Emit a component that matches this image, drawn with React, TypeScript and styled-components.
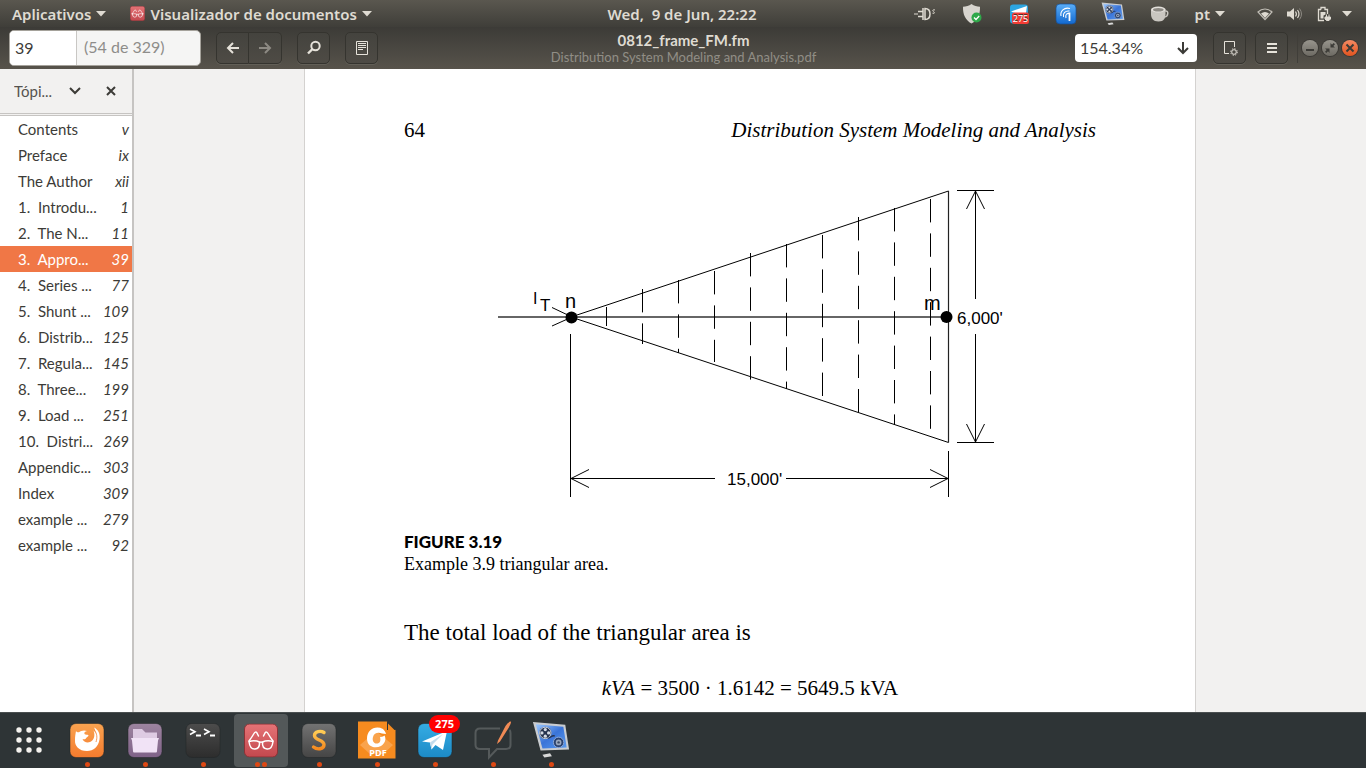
import React from "react";
import styled, { createGlobalStyle } from "styled-components";

const uiFont = `Lato, "Open Sans", "Liberation Sans", sans-serif`;
const bookFont = `"Liberation Serif", serif`;

const GlobalStyle = createGlobalStyle`
  * { box-sizing: border-box; }
  html, body { margin: 0; height: 100%; }
  body { font-family: ${uiFont}; font-size: 15px; color: #3c3b37; }
  button, input, select { font: inherit; color: inherit; }
  button { padding: 0; border: 0; background: none; cursor: default; }
  svg { display: block; flex: none; }
`;

const Desktop = styled.div`
  display: flex;
  flex-direction: column;
  height: 100vh;
  overflow: hidden;
`;

/* ---------- system panel ---------- */

const Panel = styled.header`
  flex: none;
  display: grid;
  grid-template-columns: 1fr auto 1fr;
  align-items: center;
  height: 27px;
  padding: 0 14px 0 12px;
  background: linear-gradient(#5a574f, #3f3e39);
  color: #dfdbd2;
  font-family: "Noto Sans", sans-serif;
  font-size: 15px;
  font-weight: 600;
  text-shadow: 0 -1px 0 #33322e;
`;

const PanelMenus = styled.div`
  display: flex;
  align-items: center;
  gap: 24px;
`;

const PanelButton = styled.button`
  display: flex;
  align-items: center;
  gap: 5px;
  white-space: pre;
`;

const Indicators = styled.div<{ $gap: number }>`
  display: flex;
  align-items: center;
  justify-content: flex-end;
  gap: ${(p) => p.$gap}px;
`;

/* ---------- viewer header bar ---------- */

const HeaderBar = styled.div`
  flex: none;
  display: grid;
  grid-template-columns: 1fr auto 1fr;
  align-items: center;
  height: 42px;
  padding: 0 8px 0 9px;
  background: linear-gradient(#3c3b37, #57534b);
  color: #dfdbd2;
`;

const BarGroup = styled.div<{ $gap: number; $end?: boolean }>`
  display: flex;
  align-items: center;
  justify-content: ${(p) => (p.$end ? "flex-end" : "flex-start")};
  gap: ${(p) => p.$gap}px;
`;

const PageEntry = styled.label`
  display: flex;
  width: 192px;
  height: 36px;
  border: 1px solid #a5a29b;
  border-radius: 5px;
  background: #f5f5f4;
  color: #8e8d8a;
  font-size: 16px;
  overflow: hidden;
`;

const PageInput = styled.input`
  width: 67px;
  padding: 0 5px 2px;
  border: 0;
  border-right: 1px solid #c9c7c4;
  background: #fff;
  color: #3c3b37;
  outline: 0;
`;

const PageTotal = styled.span`
  padding: 0 7px;
  line-height: 32px;
`;

const Linked = styled.div`
  display: flex;
`;

const ToolButton = styled.button<{ $side?: "left" | "right" }>`
  display: grid;
  place-items: center;
  width: 33px;
  height: 32px;
  border: 1px solid #35342f;
  border-left-width: ${(p) => (p.$side === "right" ? 0 : 1)}px;
  border-radius: ${(p) =>
    p.$side === "left" ? "5px 0 0 5px" : p.$side === "right" ? "0 5px 5px 0" : "5px"};
  background: linear-gradient(#44433e, #4e4b45);
  box-shadow: 0 1px 0 #625f57;
  color: #e6e2da;
  &:disabled { color: #8d8a83; }
`;

const Title = styled.h1`
  margin: 0;
  font-size: 15px;
  line-height: 18px;
  font-weight: 700;
  text-align: center;
`;

const Subtitle = styled.p`
  margin: 0;
  font-size: 13px;
  line-height: 16px;
  color: #918e86;
  text-align: center;
`;

const ZoomEntry = styled.label`
  display: flex;
  align-items: center;
  width: 122px;
  height: 28px;
  padding: 0 6px 0 5px;
  border-radius: 4px;
  background: #fff;
  color: #3c3b37;
`;

const ZoomInput = styled.input`
  flex: 1;
  min-width: 0;
  padding: 0 0 2px;
  border: 0;
  background: none;
  outline: 0;
  font-size: 16px;
`;

const BarDivider = styled.i`
  width: 1px;
  height: 30px;
  background: #403e39;
`;

const WindowButton = styled.button<{ $close?: boolean }>`
  display: grid;
  place-items: center;
  width: 16px;
  height: 16px;
  border-radius: 50%;
  background: ${(p) =>
    p.$close ? "linear-gradient(#f58a63, #e2541f)" : "linear-gradient(#98958d, #6d6a63)"};
  box-shadow: 0 0 0 1px #3a3834;
  color: #3c3b37;
`;

/* ---------- viewer body ---------- */

const Viewer = styled.div`
  flex: 1;
  min-height: 0;
  display: flex;
`;

const Sidebar = styled.aside`
  flex: none;
  width: 134px;
  border-right: 2px solid #c6c4c2;
  background: #fff;
`;

const SidebarHead = styled.div`
  display: flex;
  align-items: center;
  height: 47px;
  padding: 0 16px 0 14px;
  border-bottom: 3px double #c6c4c2;
  background: #f2f1f0;
  color: #55534f;
`;

const PaneSelect = styled.label`
  flex: 1;
  display: flex;
  align-items: center;
  gap: 3px;
`;

const PaneChoice = styled.select`
  appearance: none;
  width: 52px;
  padding: 0;
  border: 0;
  outline: 0;
  background: none;
`;

const Outline = styled.ul`
  margin: 0;
  padding: 0;
  list-style: none;
`;

const OutlineItem = styled.button<{ $active?: boolean }>`
  display: flex;
  justify-content: space-between;
  align-items: center;
  width: 100%;
  height: 26px;
  padding: 0 3px 0 18px;
  background: ${(p) => (p.$active ? "#f07746" : "transparent")};
  color: ${(p) => (p.$active ? "#fff" : "#3c3b37")};
  white-space: pre;
`;

const Canvas = styled.main`
  flex: 1;
  min-width: 0;
  overflow: hidden;
  background: #f2f1f0;
`;

const Sheet = styled.article`
  width: 100%;
  max-width: 892px;
  min-height: 100%;
  margin: 0 auto;
  padding: 48px 99px 0;
  border: solid #d4d2d0;
  border-width: 0 1px;
  background: #fff;
  color: #000;
  font-family: ${bookFont};
  font-size: 21px;
`;

const RunningHead = styled.div`
  display: flex;
  justify-content: space-between;
  line-height: 26px;
`;

const Figure = styled.figure`
  margin: 0;
  padding-top: 37px;
`;

const Caption = styled.figcaption`
  padding-top: 26px;
  font-size: 18px;
  line-height: 22px;
`;

const CaptionLabel = styled.strong`
  display: block;
  font-family: Lato, sans-serif;
  font-size: 17px;
  font-weight: 900;
`;

const Paragraph = styled.p`
  margin: 45px 0 0;
  font-size: 23px;
  line-height: 26px;
`;

const Equation = styled.p`
  margin: 29px 0 0;
  line-height: 26px;
  text-align: center;
`;

/* ---------- dock ---------- */

const Dock = styled.nav`
  flex: none;
  display: flex;
  gap: 4px;
  height: 56px;
  padding: 1px 2px;
  border-top: 1px solid #4a4f50;
  background: #2e3436;
`;

const DockItem = styled.button<{ $active?: boolean }>`
  position: relative;
  display: flex;
  flex-direction: column;
  align-items: center;
  width: 54px;
  padding-top: 6px;
  border-radius: 4px;
  background: ${(p) => (p.$active ? "#535859" : "transparent")};
`;

const Dots = styled.span`
  display: flex;
  gap: 2px;
  margin-top: 1px;
`;

const Dot = styled.i`
  width: 5px;
  height: 5px;
  border-radius: 50%;
  background: #dd4814;
`;

const Badge = styled.span`
  position: absolute;
  top: 1px;
  right: 2px;
  padding: 0 6px;
  border-radius: 9px;
  background: #f00;
  color: #fff;
  font: 700 11px/18px "Noto Sans", sans-serif;
`;

/* ---------- icons ---------- */

const Triangle = () => (
  <svg width="10" height="6" viewBox="0 0 10 6"><path d="M0 0h10L5 5.5z" fill="#dfdbd2" /></svg>
);

const Glasses = ({ size }: { size: number }) => (
  <svg width={size} height={size} viewBox="0 0 34 34">
    <defs><linearGradient id="red" x2="0" y2="1"><stop stopColor="#e57376" /><stop offset="1" stopColor="#c3484e" /></linearGradient></defs>
    <rect x=".5" y=".5" width="33" height="33" rx="5" fill="url(#red)" stroke="#8b3236" />
    <g fill="none" stroke="#fff" strokeWidth="1.5" strokeLinejoin="round" strokeLinecap="round">
      <path d="M5 18q6-1.500 10.500.5.500 6.500-4.500 7-5 .5-6-7.500z" />
      <path d="M29 18q-6-1.500-10.500.5-.5 6.500 4.500 7 5 .5 6-7.500z" />
      <path d="M15.500 19q1.500-1 3 0M5 17.500q3-4 5-7.500 1.500-2.500 3-.5l1.500 3M29 17.500q-3-4-5-7.500-1.500-2.500-3-.5l-1.500 3" />
    </g>
  </svg>
);

const PlugIcon = () => (
  <svg width="24" height="20" viewBox="0 0 24 20" fill="none" stroke="#dfdbd2">
    <path d="M5 7.500h5M5 12.500h5" strokeWidth="1.500" />
    <path d="M10 4v12M12 4.500c4 0 5 2.500 5 5.500s-1 5.500-5 5.500z" strokeWidth="1.500" />
    <path d="M1 10h4M22 6c-2-.8-3 .8-1.500 1.700s1 2.300-1 1.500" />
  </svg>
);

const ShieldIcon = () => (
  <svg width="24" height="22" viewBox="0 0 24 22">
    <path d="M11.500 1C9 3 6 3.500 3 3.700c-.2 8 2.500 13.300 8.500 16.800 6-3.500 8.700-8.800 8.500-16.800C17 3.500 14 3 11.500 1z" fill="#d8d5cf" />
    <circle cx="16.500" cy="14.500" r="5" fill="#2fa84a" />
    <path d="M14 14.500l2 2 3.200-3.500" fill="none" stroke="#fff" strokeWidth="1.300" />
  </svg>
);

const TelegramTray = () => (
  <svg width="24" height="22" viewBox="0 0 24 22">
    <rect x="3" y="1.500" width="18" height="19" rx="3" fill="#2ca5e0" />
    <path d="M4 8.500l16-5.500-1 7H8z" fill="#fff" />
    <rect x="5" y="9.500" width="17" height="11.500" rx="2.500" fill="#f23c34" />
    <text x="13.500" y="18.500" textAnchor="middle" fontFamily="Noto Sans" fontSize="9" fontWeight="400" fill="#fff">275</text>
  </svg>
);

const BroadcastIcon = () => (
  <svg width="24" height="22" viewBox="0 0 24 22">
    <defs><linearGradient id="blue" x2="0" y2="1"><stop stopColor="#5aaef8" /><stop offset="1" stopColor="#1268cf" /></linearGradient></defs>
    <rect x="2" y="1" width="20" height="20" rx="4" fill="url(#blue)" stroke="#174f94" strokeWidth=".7" />
    <path d="M7 13c-1-5 3-9 9-7.500M9.500 14c-1-4 2-6.500 6-6M12 15c-1-3.500 1-5 3.500-4.500" fill="none" stroke="#fff" strokeWidth="1.100" />
    <path d="M15.500 9.500V18" stroke="#fff" strokeWidth="1.800" />
  </svg>
);

const MediaScreen = ({ size }: { size: number }) => (
  <svg width={size} height={size} viewBox="0 0 40 40">
    <defs><linearGradient id="screen" x2="1" y2="1"><stop stopColor="#9cc8ff" /><stop offset=".5" stopColor="#3a74d8" /><stop offset="1" stopColor="#5a9bf0" /></linearGradient></defs>
    <path d="M1 1l34 3 4 26-30 1z" fill="#c9ccd0" />
    <path d="M4 3.500l29 2.500 3.500 22-25.500 1z" fill="url(#screen)" />
    <circle cx="14" cy="12.500" r="6.500" fill="#26334f" />
    <circle cx="14" cy="12.500" r="6" fill="none" stroke="#d5dbe5" strokeWidth="1" />
    <g fill="#d5dbe5"><circle cx="14" cy="9" r="1.700" /><circle cx="14" cy="16" r="1.700" /><circle cx="10.500" cy="12.500" r="1.700" /><circle cx="17.500" cy="12.500" r="1.700" /></g>
    <path d="M17 18c3 0 4-4 7-2" stroke="#26334f" strokeWidth="1.500" fill="none" />
    <circle cx="28" cy="22.500" r="5.500" fill="#29406d" stroke="#8fa9d6" />
    <circle cx="28" cy="22.500" r="3" fill="#9aa7bd" /><circle cx="28" cy="22.500" r="1.300" fill="#3b4a66" />
    <path d="M11 35.500l8-1.500 2 3-8 1.500z" fill="#d9d9d9" />
  </svg>
);

const CupIcon = () => (
  <svg width="24" height="22" viewBox="0 0 24 22">
    <path d="M3 7v4c0 4 2 7.500 7.500 7.500s7-3.500 7-7.500V7z" fill="#c9c6c0" />
    <ellipse cx="10.300" cy="6.500" rx="7.300" ry="3" fill="#e4e1dc" />
    <ellipse cx="10.300" cy="6.800" rx="5.300" ry="1.800" fill="#8c8983" />
    <path d="M17 8c4-1 3.500 5.500-.5 6" fill="none" stroke="#c9c6c0" strokeWidth="1.500" />
  </svg>
);

const WifiIcon = () => (
  <svg width="20" height="16" viewBox="0 0 20 16">
    <path d="M3 6c4-4 10-4 14 0l-7 7.500z" fill="none" stroke="#dfdbd2" strokeWidth="1.200" opacity=".8" />
    <path d="M6 7.500c2.500-2 5.500-2 8 0l-4 4.500z" fill="#dfdbd2" />
  </svg>
);

const VolumeIcon = () => (
  <svg width="20" height="16" viewBox="0 0 20 16">
    <path d="M3 5.500h3L10 2v12l-4-3.500H3z" fill="#dfdbd2" />
    <path d="M11.500 5.500q1.800 2.500 0 5M13.500 4q3 4 0 8" fill="none" stroke="#dfdbd2" strokeWidth="1.200" />
    <path d="M15.500 2.500q4 5.500 0 11" fill="none" stroke="#8d8a83" />
  </svg>
);

const BatteryIcon = () => (
  <svg width="20" height="16" viewBox="0 0 20 16">
    <path d="M8 3.500V1.500h4v2h2.500V8M11 14.500H5.500v-11H8" fill="none" stroke="#dfdbd2" strokeWidth="1.300" />
    <path d="M7.500 6h5v2.500l-2 1v3h-3z" fill="#dfdbd2" />
    <path d="M12 11h5.500v2l-1.500 1.500h-2.500L12 13zM13.500 11V8.500M16 11V8.500" fill="#dfdbd2" stroke="#dfdbd2" />
  </svg>
);

const ArrowIcon = ({ d }: { d: string }) => (
  <svg width="16" height="16" viewBox="0 0 16 16" fill="none" stroke="currentColor" strokeWidth="2"><path d={d} /></svg>
);

const FindIcon = () => (
  <svg width="16" height="16" viewBox="0 0 16 16" fill="none" stroke="currentColor">
    <circle cx="9.500" cy="6" r="4.200" strokeWidth="2" /><path d="M6.500 9L2 13.500" strokeWidth="2.400" />
  </svg>
);

const NotesIcon = () => (
  <svg width="16" height="16" viewBox="0 0 16 16" fill="none" stroke="currentColor">
    <path d="M2.500 1.500h11v13h-11zM4 3.500h8M4 5.500h8M4 7.500h8M4 9.500h5" />
  </svg>
);

const PageGearIcon = () => (
  <svg width="16" height="16" viewBox="0 0 16 16" fill="none" stroke="currentColor">
    <path d="M7 13.500H2.500v-12h10V7" />
    <circle cx="12" cy="12" r="2.300" /><circle cx="12" cy="12" r="3.300" strokeDasharray="1.300 1.300" />
  </svg>
);

const MenuIcon = () => (
  <svg width="16" height="16" viewBox="0 0 16 16" stroke="currentColor" strokeWidth="2"><path d="M3 4h10M3 8h10M3 12h10" /></svg>
);

const GridIcon = () => (
  <svg width="34" height="41" viewBox="0 0 34 41" fill="#f4f2ee">
    {[7, 17, 27].map((x) => [10, 20, 30].map((y) => <circle key={`${x}-${y}`} cx={x} cy={y} r="2.700" />))}
  </svg>
);

const Tile = ({ id, from, to, children }: { id: string; from: string; to: string; children?: React.ReactNode }) => (
  <svg width="38" height="41" viewBox="0 0 38 41">
    <defs><linearGradient id={id} x2="0" y2="1"><stop stopColor={from} /><stop offset="1" stopColor={to} /></linearGradient></defs>
    <rect x="2" y="3.500" width="34" height="34" rx="6" fill={`url(#${id})`} stroke="#1f2425" strokeOpacity=".5" />
    {children}
  </svg>
);

const FirefoxIcon = () => (
  <Tile id="ff" from="#faa350" to="#f47b2e">
    <path d="M8 11c1 1.500 2 1.500 3 1.200 2-1.500 5-2.500 8-1.200-2 .3-3 1.500-2.500 3 1 1 3 .5 4 1.200.3 1.300-2 1.800-2.500 3-.5 1.500-2.500 1-3.500.8 1 3 4.500 4 7.500 3 4-1.500 5.500-6.500 3.500-11.500 1.200.8 1.800 1.800 2 3 .3-2-.3-4-1.500-6 4 2 6.500 6 5.500 12-1 7-6 11.500-12.500 11.500C11 31 6.500 26 7 20c0-3.500.5-6 1-9z" fill="#fff" />
    <path d="M26.500 10.500c2.500 3 3 7 1.500 11.500" stroke="#f47b2e" strokeWidth=".8" fill="none" />
  </Tile>
);

const FilesIcon = () => (
  <Tile id="files" from="#9d84a0" to="#7f6288">
    <path d="M7 19V9h9l3.500 3.500H31V19z" fill="#decbe3" />
    <path d="M5 18h28l-1 2.500-1 10.500c0 1-.5 1.500-1.500 1.500h-21c-1 0-1.500-.5-1.500-1.500L6 20.500z" fill="#f1e3f6" />
  </Tile>
);

const TerminalIcon = () => (
  <Tile id="term" from="#4c4c4c" to="#2d2d2d">
    <path d="M6 9l5 2.800L6 14.500M20 9l5 2.800-5 2.700" fill="none" stroke="#fff" strokeWidth="1.600" />
    <path d="M12 15.500h5M26 15.500h5" stroke="#fff" strokeWidth="1.800" />
  </Tile>
);

const SublimeIcon = () => (
  <Tile id="sub" from="#737373" to="#454545">
    <defs><linearGradient id="subs" x2="0" y2="1"><stop stopColor="#ffcc55" /><stop offset="1" stopColor="#f58a1f" /></linearGradient></defs>
    <path d="M24 12.500c-3-2-9.500-1.500-9.500 3 0 5 9.500 4 9.500 9.300 0 4.700-7 5.200-10.500 2.200" fill="none" stroke="url(#subs)" strokeWidth="3.400" strokeLinecap="round" />
  </Tile>
);

const FoxitIcon = () => (
  <svg width="38" height="41" viewBox="0 0 38 41">
    <path d="M0 1.500h29l8.500 8.500v28.500H0z" fill="#f68b1f" />
    <path d="M29 1.500h8.500V10H29z" fill="#2e3436" /><path d="M30 3.500l6.500 6.500H30z" fill="#f68b1f" />
    <path d="M2 25l16-14 17 14-10 9H12z" fill="#fbb46b" opacity=".6" />
    <path d="M25 9C17 5 9 10 9 18.500S17 29 23 26c4-2.500 5.500-7 3.500-10.500-1.500 1.500-3 1.500-4.500 1.500 1 3.500 0 6-2.500 6.500-4 .5-5.500-3-4.500-6.500 1-4 5-5 9-3.500l4 .5c-.5-2-1.500-3.500-3-5z" fill="#fff" />
    <text x="20" y="36" textAnchor="middle" fontFamily="Open Sans" fontWeight="700" fontSize="9" fill="#fff">PDF</text>
  </svg>
);

const TelegramIcon = () => (
  <Tile id="tg" from="#35ace4" to="#1c8ac6">
    <path d="M6 21.500L31 11l-4 19-7.500-5-4 4.500-1.500-7z" fill="#fff" />
    <path d="M14 22.500L27 14l-10.500 10.500-1 5z" fill="#c3dcec" />
  </Tile>
);

const NotePenIcon = () => (
  <svg width="38" height="41" viewBox="0 0 38 41">
    <path d="M26 8.500H6q-4.500 0-4.500 4.500v12q0 4 4.500 4h9v8.500l8-8.500h9q4.500 0 4.500-4V13q0-2-1-3" fill="none" stroke="#555a5b" strokeWidth="2" />
    <path d="M37 1.500q-3 0-5.500 4.500L24 20.500l-1 3.500 3-2.500L34.500 8q3-4.500 2.500-6.500z" fill="#f08a55" />
  </svg>
);

/* ---------- figure ---------- */

// x position, top and bottom of every load line; all share one dash pattern
const loadLines: [number, number, number][] = [
  [606.5, 307, 326],
  [642.5, 289, 344],
  [678.5, 280, 353],
  [714.5, 271, 362],
  [750.5, 253, 380],
  [786.5, 244, 389],
  [822.5, 235, 397],
  [858.5, 217, 413],
  [894.5, 208, 425],
  [930.5, 199, 429],
];

const TriangleFigure = () => (
  <svg width="100%" viewBox="404 180 692 325" role="img" aria-label="Triangular area" fontFamily="Liberation Sans">
    <g fill="none" stroke="#000">
      <path d="M498 317H948" stroke="#333" strokeWidth="1.500" />
      <path d="M948.500 191L571 317l377.500 125.500" />
      <path d="M948.500 191v251.500" stroke="#222" strokeWidth="1.200" />
      <path d="M552 307.500l20 9.500-20 9" />
      <path d="M570.500 334v163M948.500 451v46M571 478.500h144M786 478.500h162" />
      <path d="M589 469.500l-18 9 18 9M930 469.500l18 9-18 9" />
      <path d="M957 190.500h37M957 442.500h37M975.500 191v108M975.500 334v108" />
      <path d="M966.500 209l9-18 9 18M966.500 424l9 18 9-18" />
      {loadLines.map(([x, y1, y2]) => (
        <path key={x} d={`M${x} ${y1}V${y2}`} strokeDasharray="23.4 11" />
      ))}
    </g>
    <circle cx="571.5" cy="317.500" r="6" />
    <circle cx="946.5" cy="317" r="6" />
    <text x="533" y="304" fontSize="16">I</text>
    <text x="540" y="311" fontSize="17">T</text>
    <text x="565" y="308" fontSize="20">n</text>
    <text x="924" y="310" fontSize="20">m</text>
    <text x="957" y="324" fontSize="17">6,000'</text>
    <text x="727" y="485" fontSize="17">15,000'</text>
  </svg>
);

const outline: [string, string][] = [
  ["Contents", "v"],
  ["Preface", "ix"],
  ["The Author", "xii"],
  ["1.  Introdu...", "1"],
  ["2.  The N...", "11"],
  ["3.  Appro...", "39"],
  ["4.  Series ...", "77"],
  ["5.  Shunt ...", "109"],
  ["6.  Distrib...", "125"],
  ["7.  Regula...", "145"],
  ["8.  Three...", "199"],
  ["9.  Load ...", "251"],
  ["10.  Distri...", "269"],
  ["Appendic...", "303"],
  ["Index", "309"],
  ["example ...", "279"],
  ["example ...", "92"],
];

const dock: { name: string; icon: React.ReactNode; dots: number; badge?: string }[] = [
  { name: "Mostrar aplicativos", icon: <GridIcon />, dots: 0 },
  { name: "Firefox", icon: <FirefoxIcon />, dots: 1 },
  { name: "Arquivos", icon: <FilesIcon />, dots: 1 },
  { name: "Terminal", icon: <TerminalIcon />, dots: 1 },
  {
    name: "Visualizador de documentos",
    icon: <svg width="38" height="41" viewBox="0 0 38 41"><g transform="translate(2 3.500)"><Glasses size={34} /></g></svg>,
    dots: 2,
  },
  { name: "Sublime Text", icon: <SublimeIcon />, dots: 1 },
  { name: "Foxit Reader", icon: <FoxitIcon />, dots: 1 },
  { name: "Telegram", icon: <TelegramIcon />, dots: 1, badge: "275" },
  { name: "Notas", icon: <NotePenIcon />, dots: 1 },
  { name: "Gravador de tela", icon: <svg width="38" height="41" viewBox="0 0 38 41"><g transform="translate(0 1)"><MediaScreen size={38} /></g></svg>, dots: 1 },
];

export default function App() {
  return (
    <Desktop>
      <GlobalStyle />
      <Panel>
        <PanelMenus>
          <PanelButton>Aplicativos<Triangle /></PanelButton>
          <PanelButton><Glasses size={15} />Visualizador de documentos<Triangle /></PanelButton>
        </PanelMenus>
        <PanelButton>Wed,  9 de Jun, 22:22</PanelButton>
        <Indicators $gap={30}>
          <Indicators $gap={23}>
            <PlugIcon /><ShieldIcon /><TelegramTray /><BroadcastIcon /><MediaScreen size={24} /><CupIcon />
            <PanelButton>pt<Triangle /></PanelButton>
          </Indicators>
          <Indicators $gap={9}><WifiIcon /><VolumeIcon /><BatteryIcon /><Triangle /></Indicators>
        </Indicators>
      </Panel>

      <HeaderBar>
        <BarGroup $gap={15}>
          <PageEntry>
            <PageInput aria-label="Página" defaultValue="39" />
            <PageTotal>(54 de 329)</PageTotal>
          </PageEntry>
          <Linked>
            <ToolButton $side="left" aria-label="Voltar"><ArrowIcon d="M14 8H3M8 3L3 8l5 5" /></ToolButton>
            <ToolButton $side="right" aria-label="Avançar" disabled><ArrowIcon d="M2 8h11M8 3l5 5-5 5" /></ToolButton>
          </Linked>
          <ToolButton aria-label="Localizar"><FindIcon /></ToolButton>
          <ToolButton aria-label="Anotações"><NotesIcon /></ToolButton>
        </BarGroup>
        <div>
          <Title>0812_frame_FM.fm</Title>
          <Subtitle>Distribution System Modeling and Analysis.pdf</Subtitle>
        </div>
        <BarGroup $gap={9} $end>
          <BarGroup $gap={16}>
            <ZoomEntry>
              <ZoomInput aria-label="Zoom" defaultValue="154.34%" />
              <ArrowIcon d="M8 2v11M3 8l5 5 5-5" />
            </ZoomEntry>
            <ToolButton aria-label="Opções da página"><PageGearIcon /></ToolButton>
          </BarGroup>
          <ToolButton aria-label="Menu"><MenuIcon /></ToolButton>
          <BarGroup $gap={4}>
            <BarDivider />
            <WindowButton aria-label="Minimizar"><svg width="10" height="10" stroke="currentColor" strokeWidth="2"><path d="M1 7h8" /></svg></WindowButton>
            <WindowButton aria-label="Restaurar"><svg width="10" height="10" fill="currentColor"><path d="M5.500 0v4.500H10L8.300 3 10 1.300 8.700 0 7 1.700zM4.500 10V5.500H0L1.700 7 0 8.700 1.300 10 3 8.300z" /></svg></WindowButton>
            <WindowButton $close aria-label="Fechar"><svg width="10" height="10" stroke="currentColor" strokeWidth="2"><path d="M1.500 1.500l7 7M8.500 1.500l-7 7" /></svg></WindowButton>
          </BarGroup>
        </BarGroup>
      </HeaderBar>

      <Viewer>
        <Sidebar>
          <SidebarHead>
            <PaneSelect>
              <PaneChoice aria-label="Painel"><option>Tópi...</option></PaneChoice>
              <svg width="12" height="8" fill="none" stroke="#3c3b37" strokeWidth="2"><path d="M1 1l5 5 5-5" /></svg>
            </PaneSelect>
            <button aria-label="Fechar painel">
              <svg width="10" height="10" stroke="#3c3b37" strokeWidth="2"><path d="M1 1l8 8M9 1l-8 8" /></svg>
            </button>
          </SidebarHead>
          <Outline>
            {outline.map(([label, page], i) => (
              <li key={i}>
                <OutlineItem $active={page === "39"}>
                  <span>{label}</span>
                  <em>{page}</em>
                </OutlineItem>
              </li>
            ))}
          </Outline>
        </Sidebar>

        <Canvas>
          <Sheet>
            <RunningHead>
              <span>64</span>
              <em>Distribution System Modeling and Analysis</em>
            </RunningHead>
            <Figure>
              <TriangleFigure />
              <Caption>
                <CaptionLabel>FIGURE 3.19</CaptionLabel>
                Example 3.9 triangular area.
              </Caption>
            </Figure>
            <Paragraph>The total load of the triangular area is</Paragraph>
            <Equation><em>kVA</em> = 3500 · 1.6142 = 5649.5 kVA</Equation>
          </Sheet>
        </Canvas>
      </Viewer>

      <Dock>
        {dock.map((app) => (
          <DockItem key={app.name} aria-label={app.name} $active={app.dots === 2}>
            {app.icon}
            {app.badge && <Badge>{app.badge}</Badge>}
            <Dots>{Array.from({ length: app.dots }, (_, i) => <Dot key={i} />)}</Dots>
          </DockItem>
        ))}
      </Dock>
    </Desktop>
  );
}
